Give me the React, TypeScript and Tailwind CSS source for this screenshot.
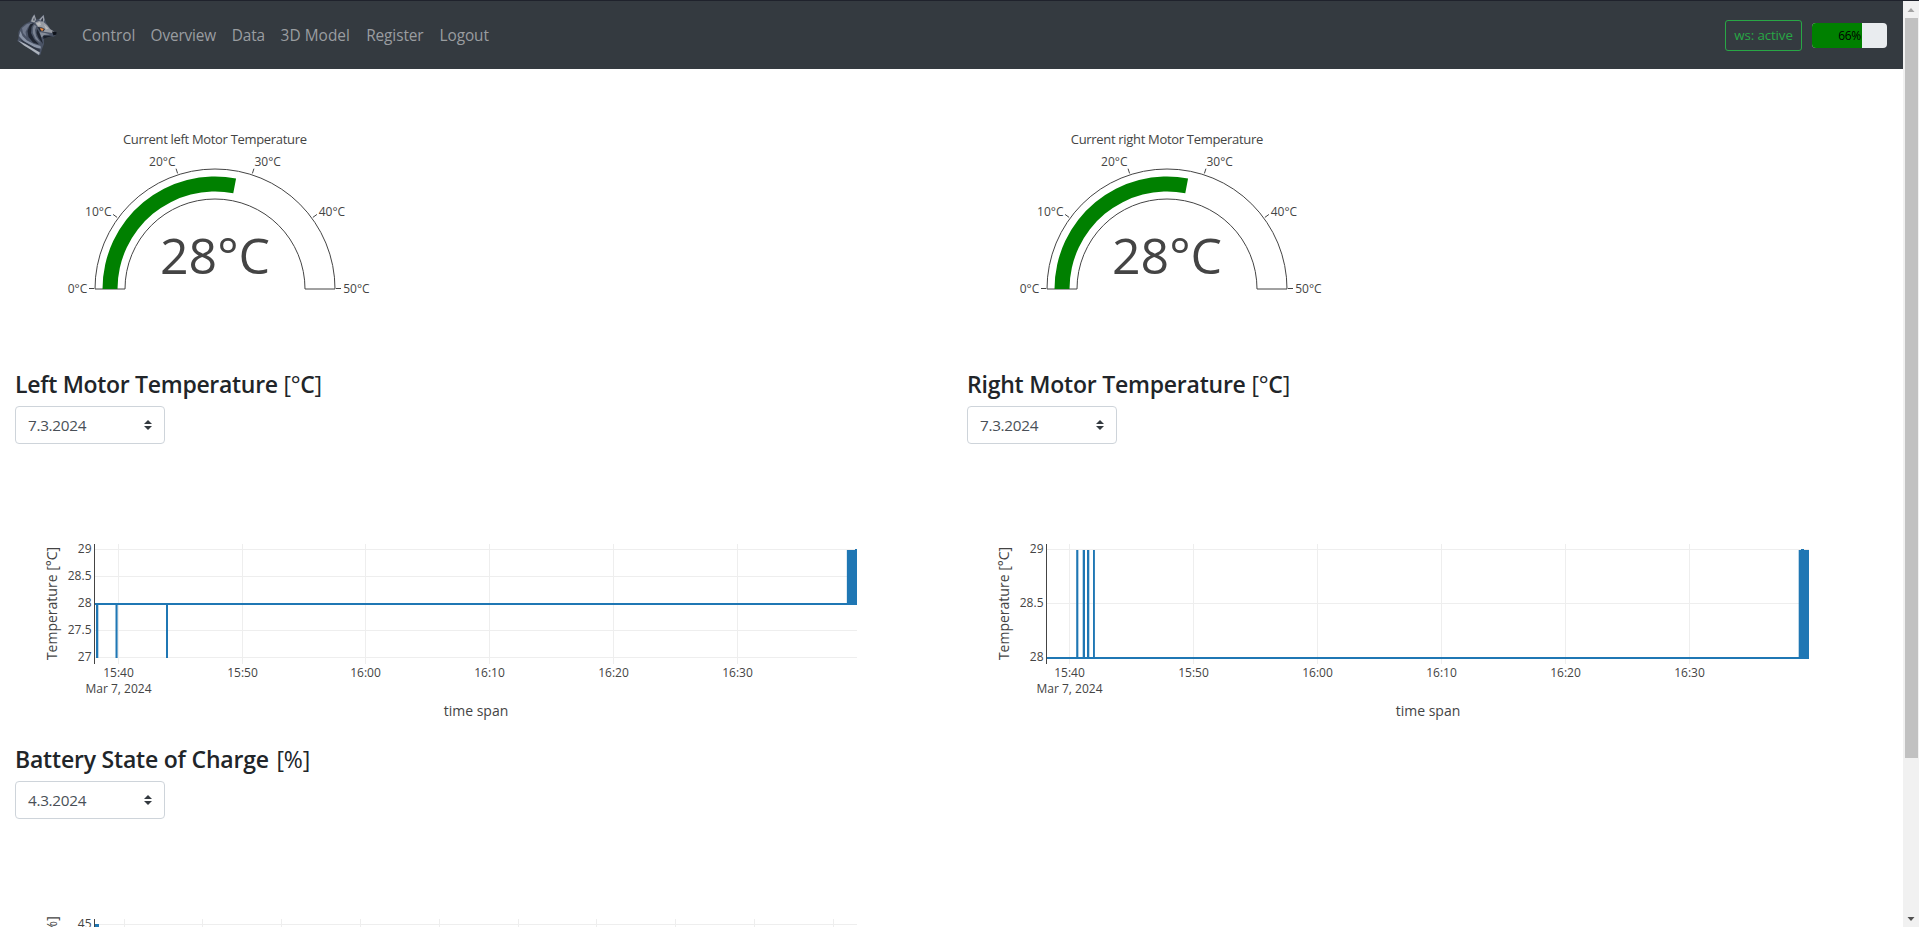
import React from "react";

const FONT = "font-['Open_Sans','Noto_Sans',sans-serif]";

function WolfLogo() {
  return (
    <svg width="40" height="44" viewBox="17 13 40 44" className="block">
      <path d="M17.300 41 L18.500 38 L18.500 32 L21 27.500 L25 24 L30 21.500 L32 17 L34.500 14 L36.500 19.500 L39 19 L43.700 14.500 L45 20 L46.500 23.500 L49.500 27.500 L51 30 L56 32 L56.500 34.500 L54 36.500 L46 37.500 L44 39.500 L44 44 L42 49 L40.500 54.500 L38.500 55.500 L31 50 L24 45.500 Z" fill="#4a5365" />
      <path d="M31 21.500 L32.500 17.500 L34.300 14.500 L36 19.500 L34.500 22.500 Z" fill="#a4a8ae" />
      <path d="M32.800 20.500 L34.300 17 L34.800 20.500 Z" fill="#4b5361" />
      <path d="M39 20 L43.600 15 L44.500 20 L43.500 22 Z" fill="#9a9fa8" />
      <path d="M40.500 20.500 L43 17.500 L43 21.500 Z" fill="#353c4a" />
      <path d="M35 22.500 L39 21 L43.500 22 L47 25 L50 29 L54 31.500 L52 33 L46 32 L41.500 31.500 L38 27 Z" fill="#989ca4" />
      <path d="M36 23.500 L40 22 L41 25 L38.500 26 Z M44 24.500 L48.500 28.500 L46 29.500 Z" fill="#bcbdbe" />
      <path d="M37.500 27 L42 27.500 L45 29 L43.500 31.500 L40 31 Z" fill="#232936" />
      <path d="M40 28 L43.700 28.800 L43 30.800 L41 30.500 Z" fill="#ee8a3c" />
      <path d="M52 31.500 L56.500 32 L56.500 34.500 L53.500 35.500 Z" fill="#10141c" />
      <path d="M43 35.500 L53 36 L47 37.500 L43.500 39 Z" fill="#1a202b" />
      <path d="M39.500 32 L45 33 L50 34.500 L44 35 L41.500 37.500 Z" fill="#868d9a" />
      <path d="M22 28 L27 24 L32 23 L28 27 L25.500 32 L26.500 37 L23 33 Z" fill="#6f788b" />
      <path d="M30 24.500 L34 23 L31.500 27 L31 33 L34 39 L39 44.500 L33 42.500 L28.500 37 L27.500 31 Z" fill="#1f2531" />
      <path d="M34 25 L36.500 26 L35 30 L36 36 L40.500 43 L35.500 39 L32.800 33 L32.800 28 Z" fill="#7c8494" />
      <path d="M37 29 L39 32 L41 37 L43 44 L38.500 38 L36.500 33 Z" fill="#1f2531" />
      <path d="M19 36 L20.500 31 L22.500 36 L27 40.500 L34 44 L40.500 46 L41 48.500 L35 47.500 L25 42.500 Z" fill="#8a94a6" />
      <path d="M20 39 L27 43 L34 47 L40 49.500 L39.500 52 L31 47.500 L23 43 Z" fill="#303745" />
      <path d="M18 40.500 L25 43.800 L33 48.500 L39.800 52.500 L39 55 L31 49.800 L24 45.500 Z" fill="#aeb4bd" />
    </svg>
  );
}

function NavLink({ label, width, tracking }: { label: string; width: string; tracking: string }) {
  return (
    <a href="#" className={`block whitespace-nowrap text-[15.4px] leading-6 text-[#9a9da0] ${width} ${tracking}`}>
      {label}
    </a>
  );
}

function Navbar() {
  return (
    <nav className="flex h-[69px] items-center justify-between border-t border-[#1f222c] bg-[#343a40] pl-[17px] pr-4">
      <div className="flex items-center">
        <WolfLogo />
        <div className="ml-[25px] flex gap-4 pt-0.5">
          <NavLink label="Control" width="w-[52.6px]" tracking="tracking-[0px]" />
          <NavLink label="Overview" width="w-[65.1px]" tracking="tracking-[-0.15px]" />
          <NavLink label="Data" width="w-[32.9px]" tracking="tracking-[-0.1px]" />
          <NavLink label="3D Model" width="w-[69.6px]" tracking="tracking-[0.05px]" />
          <NavLink label="Register" width="w-[57.4px]" tracking="tracking-[-0.1px]" />
          <NavLink label="Logout" width="w-[50.2px]" tracking="tracking-[-0.1px]" />
        </div>
      </div>
      <div className="flex items-center gap-2.5">
        <button className="h-[31px] w-[77px] whitespace-nowrap rounded-[3px] border border-[#28a745] text-[13.3px] leading-[21px] tracking-[-0.1px] text-[#28a745]">
          ws: active
        </button>
        <div className="relative h-[25px] w-[75px] overflow-hidden rounded bg-[#e9ecef]">
          <div className="h-full w-[50px] bg-[#008000]" />
          <span className="absolute inset-0 text-center text-[12px] leading-[25px] tracking-[-0.4px] text-black">66%</span>
        </div>
      </div>
    </nav>
  );
}

function Gauge({ title, titleWidth }: { title: string; titleWidth: number }) {
  const cx = 200;
  const cy = 189;
  const end = (Math.PI * 28) / 50;
  const ex = -Math.cos(end);
  const ey = -Math.sin(end);
  const ticks = [0, 10, 20, 30, 40, 50].map((v) => {
    const a = (Math.PI * v) / 50;
    return { v, x: -Math.cos(a), y: -Math.sin(a) };
  });
  return (
    <svg width="400" height="260" viewBox="0 0 400 260" className="block" fontSize="12" fill="#444">
      <text x={cx} y="44" fontSize="13" textAnchor="middle" textLength={titleWidth}>{title}</text>
      <path
        d={`M${cx - 120} ${cy} A120 120 0 0 1 ${cx + 120} ${cy} H${cx + 90} A90 90 0 0 0 ${cx - 90} ${cy} Z`}
        fill="white"
        stroke="#444"
      />
      <path
        d={`M${cx - 112.5} ${cy} A112.5 112.5 0 0 1 ${cx + 112.5 * ex} ${cy + 112.5 * ey} L${cx + 97.5 * ex} ${cy + 97.5 * ey} A97.5 97.5 0 0 0 ${cx - 97.5} ${cy} Z`}
        fill="#008000"
      />
      {ticks.map((t) => (
        <line
          key={t.v}
          x1={cx + 121 * t.x}
          x2={cx + 126 * t.x}
          y1={cy - 0.5 + 121 * t.y}
          y2={cy - 0.5 + 126 * t.y}
          stroke="#444"
        />
      ))}
      <text x="72.200" y="192.600" textAnchor="end">0°C</text>
      <text x="96.500" y="115.600" textAnchor="end">10°C</text>
      <text x="160.500" y="65.600" textAnchor="end">20°C</text>
      <text x="239.500" y="65.600">30°C</text>
      <text x="303.700" y="115.600">40°C</text>
      <text x="328.200" y="192.600">50°C</text>
      <text x={cx} y="174" fontSize="50" textAnchor="middle">28°C</text>
    </svg>
  );
}

type Rect = [number, number, number, number, number?];

interface ChartProps {
  title: string;
  xTicks: { x: number; label?: string }[];
  yTicks: { y: number; label: string }[];
  series: Rect[];
  date?: string;
  xTitle?: string;
}

function Chart({ title, xTicks, yTicks, series, date, xTitle }: ChartProps) {
  return (
    <svg width="860" height="300" viewBox="0 0 860 300" className="block" fontSize="12" fill="#444">
      <g fill="#eee" shapeRendering="crispEdges">
        {xTicks.map((t) => (
          <rect key={t.x} x={t.x} y="100" width="1" height="120" />
        ))}
        {yTicks.map((t) => (
          <rect key={t.y} x="80" y={t.y} width="762" height="1" />
        ))}
      </g>
      <g fill="#1f77b4" shapeRendering="crispEdges">
        {series.map(([x, y, w, h, o], i) => (
          <rect key={i} x={x} y={y} width={w} height={h} opacity={o ?? 1} />
        ))}
      </g>
      <rect x="79" y="100" width="1" height="120" shapeRendering="crispEdges" />
      {yTicks.map((t) => (
        <text key={t.y} x="76.500" y={t.y + 4} textAnchor="end">{t.label}</text>
      ))}
      {xTicks.map((t) =>
        t.label ? (
          <text key={t.x} x={t.x + 0.5} y="232.800" textAnchor="middle">{t.label}</text>
        ) : null
      )}
      {date && <text x={xTicks[0].x + 0.5} y="249" textAnchor="middle">{date}</text>}
      {xTitle && <text x="461" y="272" fontSize="14" textAnchor="middle">{xTitle}</text>}
      <text transform="translate(42 159.500) rotate(-90)" fontSize="14" textAnchor="middle">{title}</text>
    </svg>
  );
}

function DateSelect({ value }: { value: string }) {
  return (
    <button className="flex h-[38px] w-[150px] items-center justify-between rounded border border-[#ced4da] bg-white pl-3 pr-3 text-[15.3px] leading-6 text-[#495057]">
      <span className="-mt-px tracking-[-0.3px]">{value}</span>
      <svg width="8" height="10" viewBox="0 0 4 5" className="block">
        <path fill="#343a40" d="M2 0L0 2h4zm0 5L0 3h4z" />
      </svg>
    </button>
  );
}

function Heading({ name, unit, tracking }: { name: string; unit: React.ReactNode; tracking: string }) {
  return (
    <h4 className={`mb-[7px] mt-px h-[29px] whitespace-nowrap text-[23px] font-semibold leading-[29px] text-[#212529] ${tracking}`}>
      {name} {unit}
    </h4>
  );
}

const hours = ["15:40", "15:50", "16:00", "16:10", "16:20", "16:30"];
const leftX = [103, 227, 350, 474, 598, 722];
const rightX = [102, 226, 350, 474, 598, 722];
const batteryX = [109, 187, 266, 345, 424, 503, 581, 660, 739, 818];

const celsius = (
  <>
    <span className="font-normal">[°</span>C<span className="font-normal">]</span>
  </>
);

export default function App() {
  return (
    <div className={`flex h-[927px] w-[1919px] overflow-hidden bg-white ${FONT}`}>
      <div className="h-full w-[1903px] overflow-hidden">
        <Navbar />
        <div className="grid grid-cols-[952px_951px]">
          <section className="h-[300px] pl-[15px] pt-[31px]">
            <Gauge title="Current left Motor Temperature" titleWidth={184} />
          </section>
          <section className="h-[300px] pl-[15px] pt-[31px]">
            <Gauge title="Current right Motor Temperature" titleWidth={192.5} />
          </section>
        </div>
        <div className="grid grid-cols-[952px_951px]">
          <section className="h-[375px] pl-[15px]">
            <Heading name="Left Motor Temperature" unit={celsius} tracking="tracking-[-0.3px]" />
            <DateSelect value="7.3.2024" />
            <Chart
              title="Temperature [°C]"
              date="Mar 7, 2024"
              xTitle="time span"
              xTicks={leftX.map((x, i) => ({ x, label: hours[i] }))}
              yTicks={[
                { y: 105, label: "29" },
                { y: 132, label: "28.5" },
                { y: 159, label: "28" },
                { y: 186, label: "27.5" },
                { y: 213, label: "27" },
              ]}
              series={[
                [80, 159, 762, 2],
                [81, 160, 2, 54],
                [83, 160, 1, 54, 0.3],
                [100, 160, 1, 54, 0.5],
                [101, 160, 1, 54],
                [102, 160, 1, 54, 0.6],
                [151, 160, 2, 54],
                [832, 106, 10, 55],
                [831, 106, 1, 54, 0.15],
                [840, 105, 2, 1],
              ]}
            />
          </section>
          <section className="h-[375px] pl-[15px]">
            <Heading name="Right Motor Temperature" unit={celsius} tracking="tracking-[-0.22px]" />
            <DateSelect value="7.3.2024" />
            <Chart
              title="Temperature [°C]"
              date="Mar 7, 2024"
              xTitle="time span"
              xTicks={rightX.map((x, i) => ({ x, label: hours[i] }))}
              yTicks={[
                { y: 105, label: "29" },
                { y: 159, label: "28.5" },
                { y: 213, label: "28" },
              ]}
              series={[
                [80, 213, 762, 2],
                [109, 106, 1, 108, 0.8],
                [110, 106, 1, 108],
                [111, 106, 1, 108, 0.35],
                [115, 106, 1, 108, 0.3],
                [116, 106, 2, 108],
                [120, 106, 2, 108],
                [122, 106, 1, 108, 0.3],
                [126, 106, 1, 108],
                [127, 106, 1, 108, 0.9],
                [832, 106, 10, 109],
                [831, 106, 1, 108, 0.3],
                [834, 105, 3, 1],
              ]}
            />
          </section>
          <section className="h-[375px] pl-[15px]">
            <Heading
              name="Battery State of Charge"
              unit={<span className="ml-0.5 font-normal">[%]</span>}
              tracking="tracking-[-0.2px]"
            />
            <DateSelect value="4.3.2024" />
            <Chart
              title="State of Charge [%]"
              xTicks={batteryX.map((x) => ({ x }))}
              yTicks={[{ y: 105, label: "45" }]}
              series={[[80, 105, 4, 20]]}
            />
          </section>
        </div>
      </div>
      <aside className="flex h-full w-4 flex-col items-center justify-between border-t border-[#1f222c] bg-[#f1f1f1]">
        <svg width="16" height="17" viewBox="0 0 16 17" className="block">
          <path d="M4.500 11 L8 7 L11.500 11 Z" fill="#a3a3a3" />
        </svg>
        <div className="h-[740px] w-[13px] bg-[#c1c1c1]" />
        <div className="flex-1" />
        <svg width="16" height="17" viewBox="0 0 16 17" className="block">
          <path d="M4.500 7 L8 11 L11.500 7 Z" fill="#505050" />
        </svg>
      </aside>
    </div>
  );
}
